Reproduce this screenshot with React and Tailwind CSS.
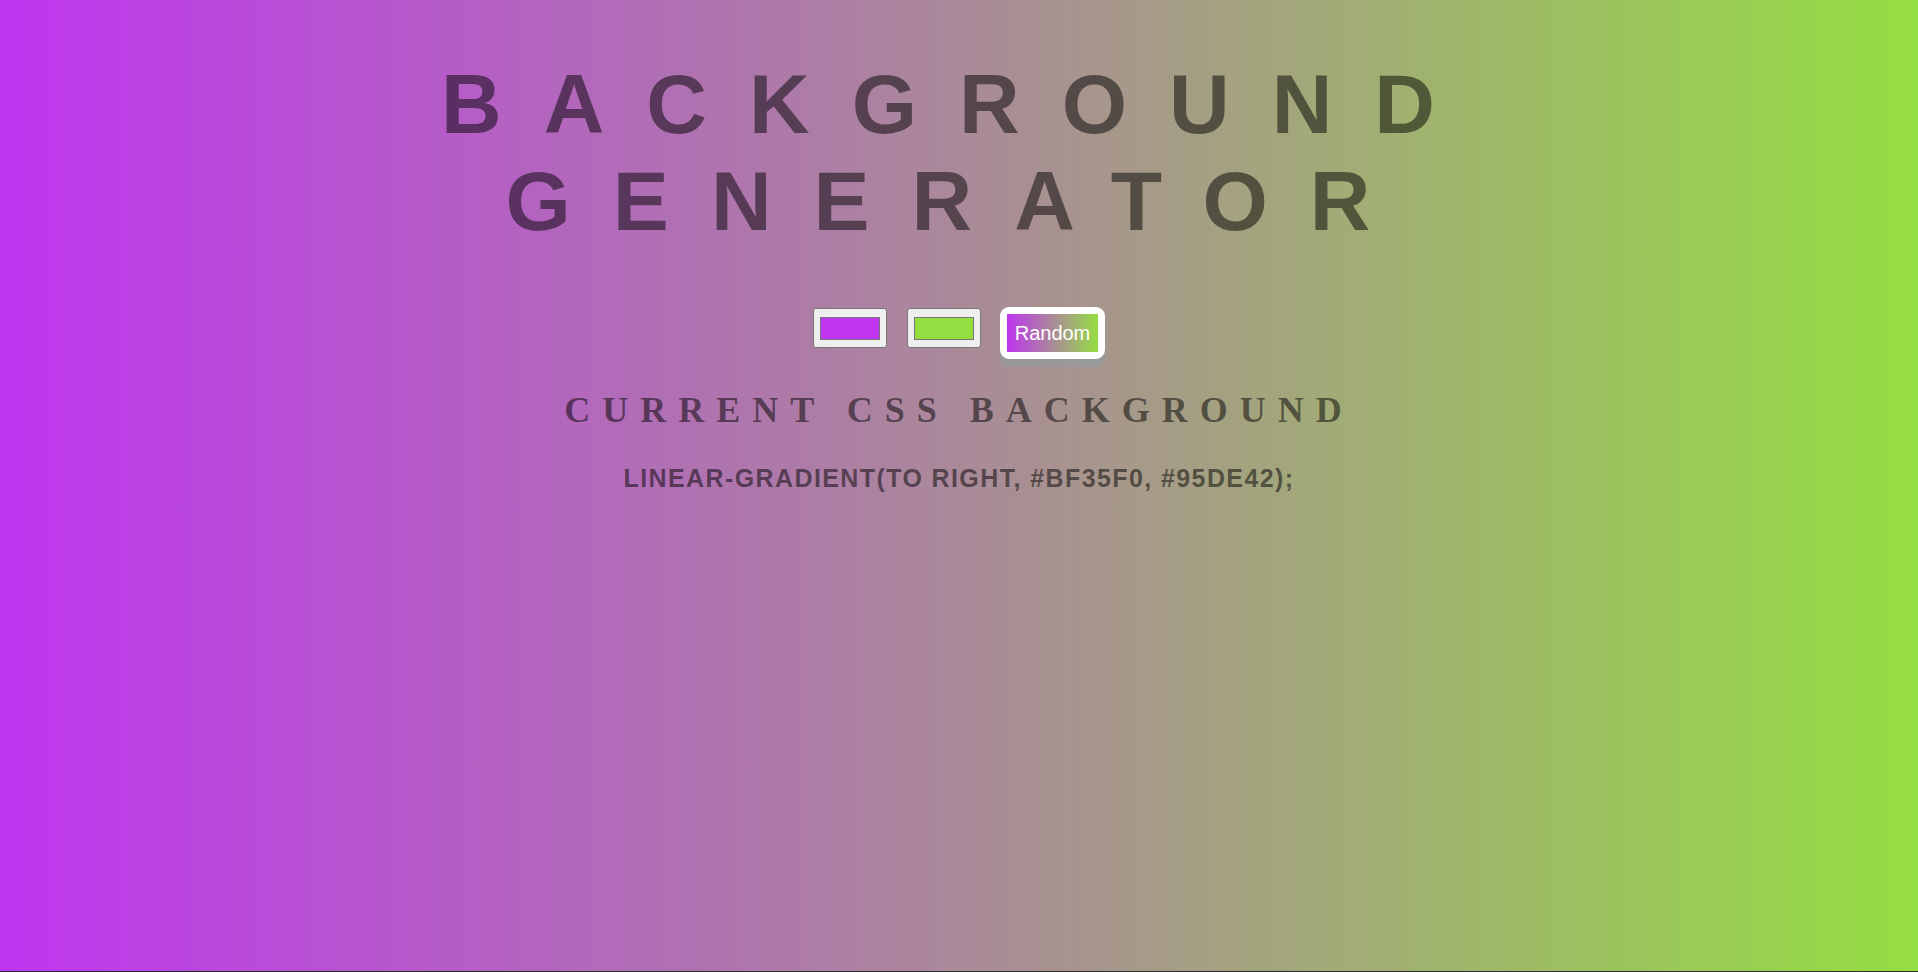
import React from "react";
import { useState } from "react";

const ColorSwatch = ({ color, className }) => {
  return (
    <div
      className={`w-[74px] h-[40px] bg-[#efefef] border border-[#767676] rounded-[3px] flex items-center justify-center ${className}`}
    >
      <div
        className="w-[60px] h-[23px] border border-[#777777]"
        style={{ backgroundColor: color }}
      />
    </div>
  );
};

const App = () => {
  const [color1] = useState("#BF35F0");
  const [color2] = useState("#95DE42");

  return (
    <div className="bg-[#2e2e2e] min-h-screen">
      <div className="h-[971px] bg-[linear-gradient(to_right,#bf35f0,#95de42)] flex flex-col items-center pt-[56px] text-black/50 font-['Liberation_Sans',Arial,sans-serif]">
        <h1 className="text-[84px] leading-[97px] font-bold tracking-[0.5em] uppercase text-center w-full">
          Background
          <br />
          Generator
        </h1>

        <div className="flex items-start mt-[57px]">
          <ColorSwatch color={color1} className="mt-px" />
          <ColorSwatch color={color2} className="mt-px ml-[20px]" />
          <button className="ml-[19px] w-[105px] h-[52px] rounded-[9px] border-[7px] border-white bg-white shadow-[0_8px_1px_#999999]">
            <span className="flex items-center justify-center w-full h-full bg-[linear-gradient(to_right,#bf35f0,#95de42)] text-white text-[20px] leading-none">
              Random
            </span>
          </button>
        </div>

        <h3 className="mt-[31px] font-['Liberation_Serif','Times_New_Roman',serif] font-bold text-[36px] leading-[40px] tracking-[12px] uppercase text-center w-full">
          Current CSS Background
        </h3>

        <p className="mt-[34px] font-bold text-[25px] leading-[29px] tracking-[1.4px] uppercase text-center w-full">
          linear-gradient(to right, {color1}, {color2});
        </p>
      </div>
    </div>
  );
};

export default App;
